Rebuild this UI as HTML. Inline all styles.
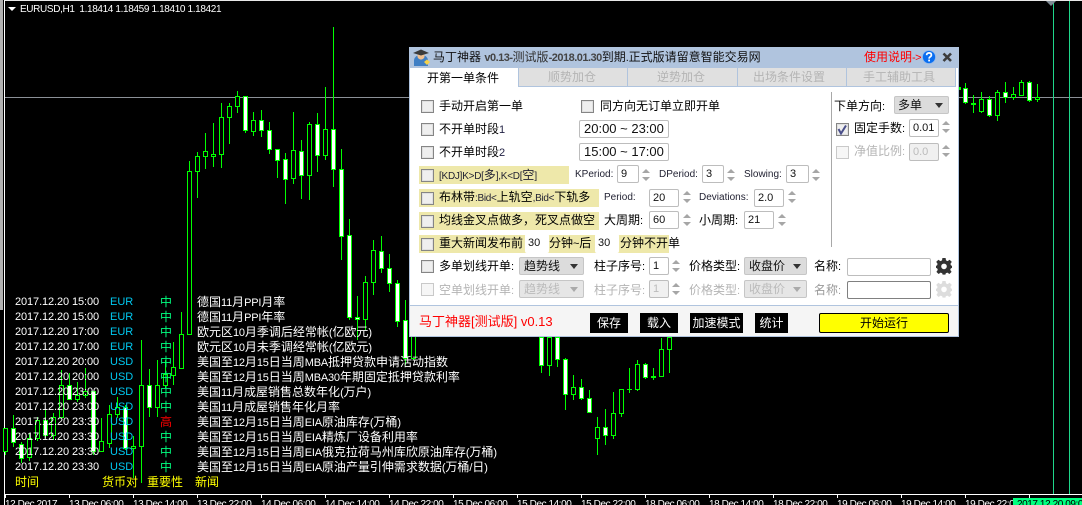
<!DOCTYPE html>
<html><head><meta charset="utf-8"><style>
html,body{margin:0;padding:0;background:#000;width:1082px;height:505px;overflow:hidden}
body{position:relative;font-family:"Liberation Sans","WenQuanYi Zen Hei","Noto Sans CJK SC",sans-serif;font-size:12px}
.t{position:absolute;white-space:nowrap;line-height:14px;height:14px}
i{font-style:normal;font-size:11px;letter-spacing:-.2px}
.n{color:#fff}.d{left:15px;font-size:11px;color:#fff;letter-spacing:-.1px}.u{left:110px;font-size:11px;color:#00c8f0}.m{left:160px;color:#00ff7f}.w{left:197px;color:#fff}
.y{color:#ff0}
.a{top:498px;color:#fff;font-size:10px;line-height:14px;letter-spacing:-.42px}
.b{position:absolute}
.k{color:#000}.g{color:#b4b4b4}
.c{position:absolute;box-sizing:border-box;width:13px;height:13px;border:1px solid #858585;background:#efefef;box-shadow:inset 0 0 0 1px #e0e0e0}
.c.x{border-color:#c9c9c9;background:#f6f6f6;box-shadow:none}
.f{position:absolute;box-sizing:border-box;background:#fff;border:1px solid #bdbdbd;border-radius:2px;height:18px;padding-left:3px;line-height:16px;font-size:11px;color:#111;white-space:nowrap}
.s{position:absolute;box-sizing:border-box;background:#dcdcdc;border:1px solid #c6c6c6;border-radius:2px;height:18px;padding-left:4px;line-height:16px;color:#111}
.s:after{content:"";position:absolute;right:5px;top:6px;border:4px solid transparent;border-top:5px solid #333;border-bottom:0}
.s.x{color:#bbb;background:#e6e6e6}.s.x:after{border-top-color:#aaa}
.l{position:absolute;background:#eee8aa}
.o{position:absolute;background:#000;color:#fff;text-align:center;height:20px;line-height:20px;top:313px}
svg{position:absolute;left:0;top:0}
.cd rect{width:4px;stroke:#00ff00;stroke-width:1;shape-rendering:crispEdges}
.cd rect.h{fill:#000}.cd rect.v{fill:#fff}
</style></head><body>

<svg width="1082" height="505" style="shape-rendering:crispEdges">
<rect x="0" y="0" width="3" height="310" fill="#b0b0b0"/>
<rect x="4" y="0" width="1078" height="1" fill="#e8e8e8"/>
<rect x="4" y="0" width="1" height="505" fill="#fff"/>
<rect x="5" y="97" width="1077" height="1" fill="#8b9097"/>
<rect x="1053" y="1" width="1" height="493" fill="#1fd68a"/>
<rect x="1069" y="1" width="1" height="493" fill="#1fd68a"/>
<path d="M1046 1H1056L1051 6Z" fill="#7f8a94" style="shape-rendering:auto"/>
<rect x="5" y="494" width="1077" height="1" fill="#fff"/>
<path stroke="#fff" d="M5.5 494V498M69.5 494V498M133.5 494V498M197.5 494V498M261.5 494V498M325.5 494V498M389.5 494V498M453.5 494V498M517.5 494V498M581.5 494V498M645.5 494V498M709.5 494V498M773.5 494V498M837.5 494V498M901.5 494V498M965.5 494V498M1029.5 494V498"/>
<path d="M8 7H16L12 11Z" fill="#fff" style="shape-rendering:auto"/>
</svg>

<svg class="cd" width="1082" height="505" style="shape-rendering:crispEdges">
<path stroke="#00ff00" fill="none" d="M5.5 428V455M13.5 415V447M21.5 442V463M29.5 433V461M37.5 417V441M45.5 410V438M53.5 413V440M61.5 370V418M69.5 373V400M77.5 382V402M85.5 368V398M93.5 391V455M101.5 418V451M109.5 405V448M117.5 397V418M125.5 405V450M133.5 436V478M141.5 340V483M149.5 369V417M157.5 360V417M165.5 360V388M173.5 342V385M181.5 312V369M189.5 161V334M197.5 152V198M205.5 133V169M213.5 123V167M221.5 103V168M229.5 103V144M237.5 91V113M245.5 96V133M253.5 112V136M261.5 110V137M269.5 122V154M277.5 149V178M285.5 153V204M293.5 112V184M301.5 140V199M309.5 122V200M317.5 113V172M325.5 87V160M333.5 27V187M341.5 149V260M349.5 219V320M357.5 296V340M365.5 276V330M373.5 240V295M381.5 236V273M389.5 254V292M397.5 280V327M405.5 300V365M413.5 320V360M541.5 337V373M549.5 337V376M557.5 337V367M565.5 358V410M573.5 375V400M581.5 379V400M589.5 390V412M597.5 417V455M605.5 409V445M613.5 392V439M621.5 389V417M629.5 368V393M637.5 360V391M645.5 363V379M653.5 368V380M661.5 338V376M669.5 337V373M965.5 83V104M973.5 95V113M981.5 92V113M989.5 96V117M997.5 90V121M1005.5 82V103M1013.5 87V100M1021.5 80V96M1029.5 81V102M1037.5 84V102M627 389.5H632M651 376.5H656M651 377.5H656M971 103.5H976M971 104.5H976"/>
<rect class="h" x="3.5" y="428.5" height="23"/><rect class="v" x="11.5" y="428.5" height="14"/><rect class="v" x="19.5" y="444.5" height="14"/><rect class="h" x="27.5" y="438.5" height="19"/><rect class="h" x="35.5" y="420.5" height="18"/><rect class="v" x="43.5" y="420.5" height="15"/><rect class="h" x="51.5" y="417.5" height="18"/><rect class="h" x="59.5" y="385.5" height="32"/><rect class="v" x="67.5" y="385.5" height="14"/><rect class="h" x="75.5" y="395.5" height="4"/><rect class="h" x="83.5" y="391.5" height="4"/><rect class="v" x="91.5" y="391.5" height="60"/><rect class="h" x="99.5" y="441.5" height="10"/><rect class="h" x="107.5" y="414.5" height="29"/><rect class="h" x="115.5" y="407.5" height="7"/><rect class="v" x="123.5" y="407.5" height="41"/><rect class="h" x="131.5" y="446.5" height="2"/><rect class="h" x="139.5" y="385.5" height="61"/><rect class="v" x="147.5" y="385.5" height="22"/><rect class="h" x="155.5" y="385.5" height="22"/><rect class="h" x="163.5" y="374.5" height="11"/><rect class="h" x="171.5" y="367.5" height="8"/><rect class="h" x="179.5" y="334.5" height="34"/><rect class="h" x="187.5" y="171.5" height="163"/><rect class="h" x="195.5" y="156.5" height="15"/><rect class="h" x="203.5" y="151.5" height="5"/><rect class="h" x="211.5" y="154.5" height="2"/><rect class="h" x="219.5" y="117.5" height="37"/><rect class="h" x="227.5" y="106.5" height="11"/><rect class="h" x="235.5" y="96.5" height="10"/><rect class="v" x="243.5" y="96.5" height="34"/><rect class="h" x="251.5" y="120.5" height="11"/><rect class="v" x="259.5" y="120.5" height="10"/><rect class="v" x="267.5" y="130.5" height="19"/><rect class="v" x="275.5" y="149.5" height="11"/><rect class="v" x="283.5" y="159.5" height="20"/><rect class="h" x="291.5" y="150.5" height="28"/><rect class="v" x="299.5" y="151.5" height="24"/><rect class="h" x="307.5" y="124.5" height="51"/><rect class="v" x="315.5" y="124.5" height="31"/><rect class="h" x="323.5" y="129.5" height="26"/><rect class="v" x="331.5" y="129.5" height="40"/><rect class="v" x="339.5" y="169.5" height="67"/><rect class="v" x="347.5" y="235.5" height="82"/><rect class="v" x="355.5" y="317.5" height="2"/><rect class="h" x="363.5" y="282.5" height="37"/><rect class="h" x="371.5" y="250.5" height="32"/><rect class="v" x="379.5" y="251.5" height="17"/><rect class="v" x="387.5" y="268.5" height="15"/><rect class="v" x="395.5" y="283.5" height="38"/><rect class="v" x="403.5" y="320.5" height="38"/><rect class="h" x="411.5" y="330.5" height="28"/><rect class="v" x="539.5" y="337.5" height="28"/><rect class="h" x="547.5" y="337.5" height="28"/><rect class="v" x="555.5" y="337.5" height="22"/><rect class="v" x="563.5" y="359.5" height="35"/><rect class="h" x="571.5" y="387.5" height="7"/><rect class="v" x="579.5" y="387.5" height="11"/><rect class="v" x="587.5" y="398.5" height="14"/><rect class="h" x="595.5" y="427.5" height="11"/><rect class="v" x="603.5" y="427.5" height="8"/><rect class="h" x="611.5" y="413.5" height="22"/><rect class="h" x="619.5" y="389.5" height="24"/><rect class="h" x="635.5" y="364.5" height="25"/><rect class="v" x="643.5" y="364.5" height="13"/><rect class="h" x="659.5" y="349.5" height="27"/><rect class="h" x="667.5" y="337.5" height="12"/><rect class="v" x="963.5" y="88.5" height="14"/><rect class="h" x="979.5" y="99.5" height="12"/><rect class="v" x="987.5" y="99.5" height="16"/><rect class="h" x="995.5" y="92.5" height="23"/><rect class="v" x="1003.5" y="92.5" height="5"/><rect class="h" x="1011.5" y="94.5" height="3"/><rect class="h" x="1019.5" y="82.5" height="13"/><rect class="v" x="1027.5" y="82.5" height="18"/><rect class="h" x="1035.5" y="97.5" height="2"/>
<path fill="#00ff00" d="M959 87h2v3h-2z"/>
</svg>

<div class="t n" style="left:20px;top:2px;font-size:10px;letter-spacing:-.36px;top:3px">EURUSD,H1&nbsp; 1.18414 1.18459 1.18410 1.18421</div>

<div class="t d" style="top:295px">2017.12.20 15:00</div><div class="t u" style="top:295px">EUR</div><div class="t m" style="top:295px">中</div><div class="t w" style="top:295px">德国<i>11</i>月<i>PPI</i>月率</div>
<div class="t d" style="top:310px">2017.12.20 15:00</div><div class="t u" style="top:310px">EUR</div><div class="t m" style="top:310px">中</div><div class="t w" style="top:310px">德国<i>11</i>月<i>PPI</i>年率</div>
<div class="t d" style="top:325px">2017.12.20 17:00</div><div class="t u" style="top:325px">EUR</div><div class="t m" style="top:325px">中</div><div class="t w" style="top:325px">欧元区<i>10</i>月季调后经常帐<i>(</i>亿欧元<i>)</i></div>
<div class="t d" style="top:340px">2017.12.20 17:00</div><div class="t u" style="top:340px">EUR</div><div class="t m" style="top:340px">中</div><div class="t w" style="top:340px">欧元区<i>10</i>月未季调经常帐<i>(</i>亿欧元<i>)</i></div>
<div class="t d" style="top:355px">2017.12.20 20:00</div><div class="t u" style="top:355px">USD</div><div class="t m" style="top:355px">中</div><div class="t w" style="top:355px">美国至<i>12</i>月<i>15</i>日当周<i>MBA</i>抵押贷款申请活动指数</div>
<div class="t d" style="top:370px">2017.12.20 20:00</div><div class="t u" style="top:370px">USD</div><div class="t m" style="top:370px">中</div><div class="t w" style="top:370px">美国至<i>12</i>月<i>15</i>日当周<i>MBA30</i>年期固定抵押贷款利率</div>
<div class="t d" style="top:385px">2017.12.20 23:00</div><div class="t u" style="top:385px">USD</div><div class="t m" style="top:385px">中</div><div class="t w" style="top:385px">美国<i>11</i>月成屋销售总数年化<i>(</i>万户<i>)</i></div>
<div class="t d" style="top:400px">2017.12.20 23:00</div><div class="t u" style="top:400px">USD</div><div class="t m" style="top:400px">中</div><div class="t w" style="top:400px">美国<i>11</i>月成屋销售年化月率</div>
<div class="t d" style="top:415px">2017.12.20 23:30</div><div class="t u" style="top:415px">USD</div><div class="t m" style="top:415px;color:#f00">高</div><div class="t w" style="top:415px">美国至<i>12</i>月<i>15</i>日当周<i>EIA</i>原油库存<i>(</i>万桶<i>)</i></div>
<div class="t d" style="top:430px">2017.12.20 23:30</div><div class="t u" style="top:430px">USD</div><div class="t m" style="top:430px">中</div><div class="t w" style="top:430px">美国至<i>12</i>月<i>15</i>日当周<i>EIA</i>精炼厂设备利用率</div>
<div class="t d" style="top:445px">2017.12.20 23:30</div><div class="t u" style="top:445px">USD</div><div class="t m" style="top:445px">中</div><div class="t w" style="top:445px">美国至<i>12</i>月<i>15</i>日当周<i>EIA</i>俄克拉荷马州库欣原油库存<i>(</i>万桶<i>)</i></div>
<div class="t d" style="top:460px">2017.12.20 23:30</div><div class="t u" style="top:460px">USD</div><div class="t m" style="top:460px">中</div><div class="t w" style="top:460px">美国至<i>12</i>月<i>15</i>日当周<i>EIA</i>原油产量引伸需求数据<i>(</i>万桶<i>/</i>日<i>)</i></div>
<div class="t y" style="left:15px;top:475px">时间</div><div class="t y" style="left:102px;top:475px">货币对</div><div class="t y" style="left:147px;top:475px">重要性</div><div class="t y" style="left:195px;top:475px">新闻</div>

<div class="t a" style="left:5px">12 Dec 2017</div><div class="t a" style="left:69px">13 Dec 06:00</div><div class="t a" style="left:133px">13 Dec 14:00</div><div class="t a" style="left:197px">13 Dec 22:00</div><div class="t a" style="left:261px">14 Dec 06:00</div><div class="t a" style="left:325px">14 Dec 14:00</div><div class="t a" style="left:389px">14 Dec 22:00</div><div class="t a" style="left:453px">15 Dec 06:00</div><div class="t a" style="left:517px">15 Dec 14:00</div><div class="t a" style="left:581px">15 Dec 22:00</div><div class="t a" style="left:645px">18 Dec 06:00</div><div class="t a" style="left:709px">18 Dec 14:00</div><div class="t a" style="left:773px">18 Dec 22:00</div><div class="t a" style="left:837px">19 Dec 06:00</div><div class="t a" style="left:901px">19 Dec 14:00</div><div class="t a" style="left:965px">19 Dec 22:00</div>
<div class="b" style="left:1013px;top:498px;width:69px;height:7px;background:#00ff7f"></div>
<div class="t a" style="left:1017px;color:#000;overflow:hidden;width:65px">2017.12.20 09:00</div>

<!-- panel -->
<div class="b" style="left:409px;top:47px;width:550px;height:290px;background:#fff;box-shadow:inset 0 0 0 1px #b0c4de"></div>
<div class="b" style="left:409px;top:47px;width:550px;height:21px;background:#b0c4de"></div>
<div class="b" style="left:519px;top:68px;width:436px;height:19px;background:#e0e0e0"></div>
<div class="b" style="left:518px;top:68px;width:1px;height:19px;background:#b0c4de"></div>
<div class="b" style="left:627px;top:68px;width:1px;height:19px;background:#b0c4de"></div>
<div class="b" style="left:737px;top:68px;width:1px;height:19px;background:#b0c4de"></div>
<div class="b" style="left:846px;top:68px;width:1px;height:19px;background:#b0c4de"></div>
<div class="b" style="left:955px;top:68px;width:1px;height:19px;background:#b0c4de"></div>
<div class="b" style="left:518px;top:86px;width:438px;height:1px;background:#b0c4de"></div>
<div class="b" style="left:410px;top:305px;width:548px;height:31px;background:#f5f5f5;border-top:1px solid #b0c4de;box-sizing:border-box"></div>
<div class="b" style="left:831px;top:92px;width:1px;height:155px;background:#a8a8a8"></div>

<svg width="1082" height="505">
<defs><g id="sp"><path d="M-4 -2L0 -6L4 -2ZM-4 2H4L0 6Z" fill="#a6a6a6"/></g>
<g id="gr"><path fill-rule="evenodd" d="M-1.6 -8H1.6L2 -5.6L3.6 -4.9L5.6 -6.3L7.8 -4.1L6.4 -2.1L7 -.5L8 -.2V2L6.9 2.3L6.2 3.9L7.6 5.9L5.4 8L3.4 6.6L1.8 7.3L1.4 8.6H-1.4L-1.8 7.3L-3.4 6.6L-5.4 8L-7.6 5.9L-6.2 3.9L-6.9 2.3L-8 2V-.2L-7 -.5L-6.4 -2.1L-7.8 -4.1L-5.6 -6.3L-3.6 -4.9L-2 -5.6ZM0 -2.4A2.8 2.8 0 1 0 0 3.2A2.8 2.8 0 1 0 0 -2.4Z"/></g></defs>
<use href="#sp" x="646" y="175"/><use href="#sp" x="731" y="175"/><use href="#sp" x="816" y="175"/><use href="#sp" x="687" y="197"/><use href="#sp" x="792" y="197"/><use href="#sp" x="687" y="220"/><use href="#sp" x="782" y="220"/><use href="#sp" x="676" y="266"/><use href="#sp" x="676" y="289"/><use href="#sp" x="946" y="127"/><use href="#sp" x="946" y="151"/>
<use href="#gr" x="944" y="266" fill="#333"/><use href="#gr" x="944" y="289" fill="#ddd"/>
<!-- title icon -->
<path d="M414 60Q415 55 421 55Q427 55 428 60L428 66H414Z" fill="#3f7fc4"/>
<circle cx="421" cy="56" r="3.6" fill="#f0c090"/>
<path d="M413 53L421 49.5L429 53L421 55.5Z" fill="#3a3a3a"/>
<path d="M424 62L427 59.5L430 62L427 65Z" fill="#f5d24a"/>
<!-- help -->
<circle cx="929" cy="57" r="6.5" fill="#0a6ef0"/>
<circle cx="929" cy="57" r="6.5" fill="none" stroke="#8fb8ee" stroke-width=".7"/>
<path d="M926.6 55.2Q926.8 52.9 929.1 52.9Q931.4 53 931.4 55Q931.4 56.2 930 57Q929.1 57.5 929.1 58.6" fill="none" stroke="#fff" stroke-width="1.7"/>
<rect x="928.2" y="59.6" width="1.8" height="1.8" fill="#fff"/>
<!-- close -->
<path d="M943.5 53.5L951 61M951 53.5L943.5 61" stroke="#3c3c3c" stroke-width="2.6" fill="none"/>
</svg>

<div class="t" style="left:433px;top:50px;color:#111">马丁神器 <span style="color:#333"><i style="font-weight:bold;color:#444;letter-spacing:-.5px">v0.13-</i>测试版<i style="font-weight:bold;color:#444;letter-spacing:-.5px">-2018.01.30</i></span>到期<i>.</i>正式版请留意智能交易网</div>
<div class="t" style="left:864px;top:50px;color:#f00">使用说明<i style="letter-spacing:-.6px">-&gt;</i></div>

<div class="t k" style="left:427px;top:71px">开第一单条件</div>
<div class="t g" style="left:548px;top:70px">顺势加仓</div>
<div class="t g" style="left:657px;top:70px">逆势加仓</div>
<div class="t g" style="left:753px;top:70px">出场条件设置</div>
<div class="t g" style="left:863px;top:70px">手工辅助工具</div>

<div class="c" style="left:421px;top:100px"></div><div class="t k" style="left:439px;top:99px">手动开启第一单</div>
<div class="c" style="left:581px;top:100px"></div><div class="t k" style="left:600px;top:99px">同方向无订单立即开单</div>
<div class="c" style="left:421px;top:123px"></div><div class="t k" style="left:439px;top:122px">不开单时段<i style="color:#224">1</i></div>
<div class="f" style="left:579px;top:120px;width:90px;font-size:13px;padding-left:4px">20:00 ~ 23:00</div>
<div class="c" style="left:421px;top:146px"></div><div class="t k" style="left:439px;top:145px">不开单时段<i style="color:#224">2</i></div>
<div class="f" style="left:579px;top:143px;width:90px;font-size:13px;padding-left:4px">15:00 ~ 17:00</div>

<div class="l" style="left:419px;top:166px;width:150px;height:18px"></div>
<div class="c" style="left:421px;top:169px"></div><div class="t" style="left:439px;top:168px;color:#223"><i style="font-size:10px;letter-spacing:-.25px">[KDJ]K&gt;D[</i>多<i style="font-size:10px;letter-spacing:-.25px">],K&lt;D[</i>空<i style="font-size:10px">]</i></div>
<div class="t" style="left:575px;top:168px;font-size:10px;color:#223">KPeriod:</div><div class="f" style="left:617px;top:165px;width:22px">9</div>
<div class="t" style="left:659px;top:168px;font-size:10px;color:#223">DPeriod:</div><div class="f" style="left:702px;top:165px;width:22px">3</div>
<div class="t" style="left:744px;top:168px;font-size:10px;color:#223">Slowing:</div><div class="f" style="left:786px;top:165px;width:23px">3</div>

<div class="l" style="left:419px;top:189px;width:180px;height:18px"></div>
<div class="c" style="left:421px;top:192px"></div><div class="t k" style="left:439px;top:190px">布林带<i style="font-size:10px;color:#223;letter-spacing:-.3px">:Bid&lt;</i>上轨空<i style="font-size:10px;color:#223;letter-spacing:-.3px">,Bid&lt;</i>下轨多</div>
<div class="t" style="left:604px;top:191px;font-size:10px;color:#223">Period:</div><div class="f" style="left:649px;top:189px;width:30px">20</div>
<div class="t" style="left:699px;top:191px;font-size:10px;color:#223">Deviations:</div><div class="f" style="left:754px;top:189px;width:30px">2.0</div>

<div class="l" style="left:419px;top:212px;width:180px;height:18px"></div>
<div class="c" style="left:421px;top:215px"></div><div class="t k" style="left:439px;top:213px">均线金叉点做多，死叉点做空</div>
<div class="t k" style="left:604px;top:213px">大周期<i>:</i></div><div class="f" style="left:649px;top:211px;width:30px">60</div>
<div class="t k" style="left:699px;top:213px">小周期<i>:</i></div><div class="f" style="left:744px;top:211px;width:30px">21</div>

<div class="l" style="left:419px;top:235px;width:250px;height:18px"></div>
<div class="c" style="left:421px;top:238px"></div><div class="t k" style="left:439px;top:236px">重大新闻发布前</div>
<div class="f" style="left:525px;top:234px;width:24px;height:19px;border:0;padding-left:3px;line-height:19px">30</div><div class="t k" style="left:549px;top:236px">分钟<i>~</i>后</div>
<div class="f" style="left:595px;top:234px;width:24px;height:19px;border:0;padding-left:3px;line-height:19px">30</div><div class="t k" style="left:620px;top:236px">分钟不开单</div>

<div class="c" style="left:421px;top:260px"></div><div class="t k" style="left:439px;top:259px">多单划线开单<i>:</i></div>
<div class="s" style="left:519px;top:257px;width:65px">趋势线</div>
<div class="t k" style="left:594px;top:259px">柱子序号<i>:</i></div><div class="f" style="left:649px;top:257px;width:20px">1</div>
<div class="t k" style="left:689px;top:259px">价格类型<i>:</i></div>
<div class="s" style="left:744px;top:257px;width:63px">收盘价</div>
<div class="t k" style="left:814px;top:259px">名称<i>:</i></div><div class="f" style="left:847px;top:258px;width:84px"></div>

<div class="c x" style="left:421px;top:283px"></div><div class="t g" style="left:439px;top:283px">空单划线开单<i>:</i></div>
<div class="s x" style="left:519px;top:280px;width:65px">趋势线</div>
<div class="t g" style="left:594px;top:283px">柱子序号<i>:</i></div><div class="f" style="left:649px;top:280px;width:20px;background:#f0f0f0;color:#bbb">1</div>
<div class="t g" style="left:689px;top:283px">价格类型<i>:</i></div>
<div class="s x" style="left:744px;top:280px;width:63px">收盘价</div>
<div class="t g" style="left:814px;top:283px;color:#999">名称<i>:</i></div><div class="f" style="left:847px;top:281px;width:84px;border-color:#808080"></div>

<div class="t k" style="left:834px;top:99px">下单方向<i>:</i></div>
<div class="s" style="left:894px;top:96px;width:55px;height:18px;padding-left:3px">多单</div>
<div class="c" style="left:836px;top:123px"></div>
<svg width="1082" height="505"><path d="M838.5 129L841 133.5L846 125.5" fill="none" stroke="#4a4f8a" stroke-width="2"/></svg>
<div class="t k" style="left:854px;top:121px">固定手数<i>:</i></div><div class="f" style="left:909px;top:119px;width:30px">0.01</div>
<div class="c x" style="left:836px;top:146px"></div><div class="t g" style="left:854px;top:144px">净值比例<i>:</i></div><div class="f" style="left:909px;top:143px;width:30px;background:#f0f0f0;color:#bbb">0.0</div>

<div class="t" style="left:419px;top:315px;color:#f00;font-size:13px">马丁神器[测试版] v0.13</div>
<div class="o" style="left:590px;width:38px">保存</div>
<div class="o" style="left:640px;width:38px">载入</div>
<div class="o" style="left:690px;width:53px">加速模式</div>
<div class="o" style="left:755px;width:33px">统计</div>
<div class="o" style="left:819px;width:130px;background:#ff0;color:#000;box-sizing:border-box;border:1px solid #000;border-radius:2px;line-height:18px">开始运行</div>
</body></html>
